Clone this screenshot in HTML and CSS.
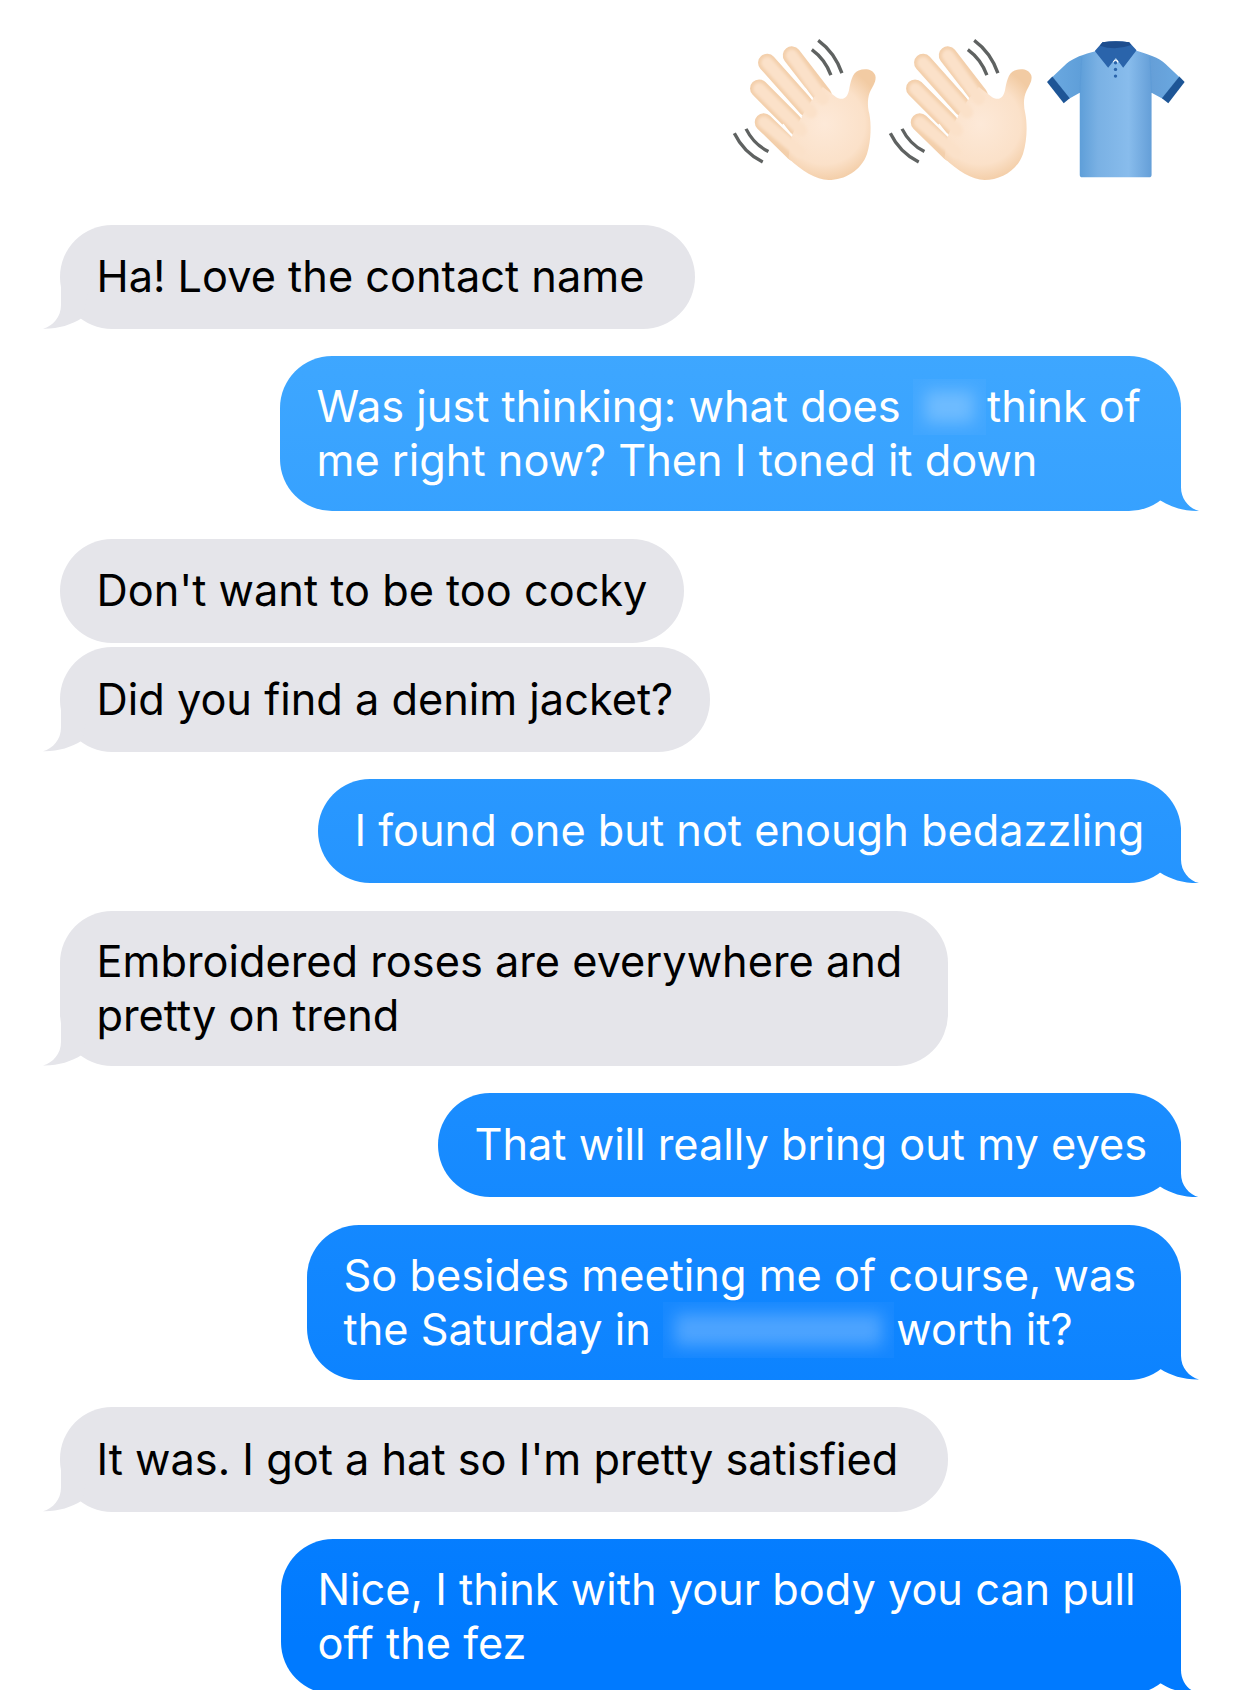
FILE: index.html
```html
<!DOCTYPE html>
<html lang="en">

<head>
    <meta charset="UTF-8">
    <meta name="viewport" content="width=device-width, initial-scale=1.0">
    <title>Messages</title>
    <link rel="stylesheet" href="styles.css">
</head>

<body>
    <svg width="0" height="0" class="defs">
        <defs>
            <radialGradient id="palmFill" gradientUnits="userSpaceOnUse" cx="370" cy="310" r="178">
                <stop offset="0" stop-color="#fde9d8" />
                <stop offset="0.68" stop-color="#fbe1c9" />
                <stop offset="1" stop-color="#f2cba3" />
            </radialGradient>
            <linearGradient id="shirtFill" x1="0" y1="0" x2="1" y2="0">
                <stop offset="0" stop-color="#6aa8e0" />
                <stop offset="0.22" stop-color="#5f9fd9" />
                <stop offset="0.36" stop-color="#7ab1e4" />
                <stop offset="0.6" stop-color="#88bcec" />
                <stop offset="0.78" stop-color="#659fd8" />
                <stop offset="1" stop-color="#6aa8e0" />
            </linearGradient>
            <filter id="soft"><feGaussianBlur stdDeviation="5" /></filter>
            <g id="hand">
                <g fill="none" stroke-linecap="round" stroke="#f3cfab" stroke-width="54">
                    <path d="M272 105L365 225" />
                    <path d="M198 127L318 262" />
                    <path d="M174 204L288 318" />
                    <path d="M188 305L280 395" />
                </g>
                <path fill="url(#palmFill)" d="M272 345L262 413C300 450 345 478 382 478C430 478 480 450 497 400C510 360 510 310 504 280C498 255 498 230 508 210C516 195 526 180 522 165C515 145 490 143 472 150C452 158 448 185 443 210C438 232 425 242 405 230L365 200L333 236L300 290Z" />
                <g fill="none" stroke-linecap="round" stroke="#fbe1c9" stroke-width="36" filter="url(#soft)">
                    <path d="M272 105L365 235" />
                    <path d="M198 127L330 275" />
                    <path d="M174 204L300 330" />
                    <path d="M188 305L295 395" />
                </g>
                <g fill="none" stroke-linecap="round" stroke="#fff" stroke-width="4">
                    <path d="M312 204L333 236" />
                    <path d="M276 260L300 290" />
                    <path d="M246 312L272 345" />
                </g>
                <g fill="none" stroke="#5f6261" stroke-width="10">
                    <path d="M351 60C385 85 408 118 422 158" />
                    <path d="M332 88C358 107 377 132 389 164" />
                    <path d="M100 338C118 375 146 405 185 424" />
                    <path d="M135 325C150 355 172 378 202 393" />
                </g>
            </g>
        </defs>
    </svg>

    <div class="thread">
        <div class="emoji-row">
            <svg class="emoji" viewBox="90 50 440 440"><use href="#hand" /></svg>
            <svg class="emoji" viewBox="90 50 440 440"><use href="#hand" /></svg>
            <svg class="emoji" viewBox="1030 50 440 440">
                <path fill="url(#shirtFill)" d="M1190 92C1150 102 1122 112 1100 130L1058 170L1108 235L1140 217L1140 462Q1140 470 1148 470L1347 470Q1355 470 1355 462L1355 217L1388 235L1438 170L1396 130C1376 112 1346 102 1305 90L1248 130Z" />
                <path fill="none" stroke="#5a9ad6" stroke-width="3" opacity="0.6" d="M1146 110L1140 217M1350 110L1355 217" />
                <path fill="#1d5596" d="M1042 185L1058 168L1110 233L1092 248Z" />
                <path fill="#1d5596" d="M1454 185L1438 168L1386 233L1405 248Z" />
                <path fill="#b4d4ee" d="M1215 85H1280L1248 122Z" />
                <path fill="#2a64ab" d="M1185 92L1208 66Q1248 60 1288 66L1310 90L1270 142L1248 113L1225 142Z" />
                <path fill="#1d4d8e" d="M1208 66Q1248 60 1288 66L1294 74Q1248 92 1200 76Z" />
                <circle fill="#2a64ab" cx="1247" cy="127" r="5" />
                <circle fill="#2a64ab" cx="1247" cy="147" r="5" />
                <circle fill="#2a64ab" cx="1247" cy="167" r="5" />
            </svg>
        </div>

        <div class="msg them tail w-635">Ha! Love the contact name</div>
        <div class="msg me tail two w-901">Was just thinking: what does <span class="redact short"></span> think of<br>me right now? Then I toned it down</div>
        <div class="msg them close w-624">Don't want to be too cocky</div>
        <div class="msg them tail w-650">Did you find a denim jacket?</div>
        <div class="msg me tail w-863">I found one but not enough bedazzling</div>
        <div class="msg them tail two w-888">Embroidered roses are everywhere and<br>pretty on trend</div>
        <div class="msg me tail w-743">That will really bring out my eyes</div>
        <div class="msg me tail two w-874">So besides meeting me of course, was<br>the Saturday in <span class="redact long"></span> worth it?</div>
        <div class="msg them tail w-888">It was. I got a hat so I'm pretty satisfied</div>
        <div class="msg me tail two w-900">Nice, I think with your body you can pull<br>off the fez</div>
    </div>
</body>

</html>
```

FILE: styles.css
```css
html,
body {
    margin: 0;
    height: 1690px;
    overflow: hidden;
    background-color: #fff;
}

body {
    font-family: Inter, "Noto Sans", sans-serif;
    font-size: 43.3px;
    line-height: 54px;
}

.defs {
    position: absolute;
}

.thread {
    display: flex;
    flex-direction: column;
    align-items: flex-start;
    padding: 37px 61px 0 60px;
}

.emoji-row {
    display: flex;
    gap: 9px;
    align-self: flex-end;
    margin-right: -9px;
    margin-bottom: 40.5px;
}

.emoji {
    display: block;
    width: 147px;
    height: 147px;
}

.msg {
    position: relative;
    box-sizing: border-box;
    padding: 24.5px 37px 26px 36.5px;
    border-radius: 52px;
    white-space: nowrap;
    margin-bottom: 27.3px;
}

.msg.two {
    padding-top: 23px;
    padding-bottom: 24px;
}

.msg.close {
    margin-bottom: 4px;
}

.them {
    background-color: #e5e5ea;
    color: #000;
}

.me {
    align-self: flex-end;
    background: linear-gradient(#4fb3ff 0, #007aff 1640px) fixed;
    color: #fff;
}

.w-624 { width: 624px; }
.w-635 { width: 635px; }
.w-650 { width: 650px; }
.w-743 { width: 743px; }
.w-863 { width: 863px; }
.w-874 { width: 874px; }
.w-888 { width: 888px; }
.w-900 { width: 900px; }
.w-901 { width: 901px; }

.tail::after {
    content: "";
    position: absolute;
    bottom: 0;
    width: 50px;
    height: 56px;
    background: inherit;
    clip-path: path("M32 0L32 32C32 44 40 53 50 55.7C35 56 22 52 11 45L0 0Z");
}

.me.tail::after {
    right: -18px;
}

.them.tail::after {
    left: -17px;
    transform: scaleX(-1);
}

.redact {
    display: inline-block;
    position: relative;
    height: 56px;
    margin-bottom: -2px;
    vertical-align: top;
    overflow: hidden;
    background-color: rgba(255, 255, 255, 0.03);
}

.redact::before {
    content: "";
    position: absolute;
    inset: 12px;
    background-color: rgba(255, 255, 255, 0.24);
    filter: blur(8px);
}

.redact.short {
    width: 73px;
    margin-right: -11px;
}

.redact.long {
    width: 231px;
    margin-right: -10px;
}
```
